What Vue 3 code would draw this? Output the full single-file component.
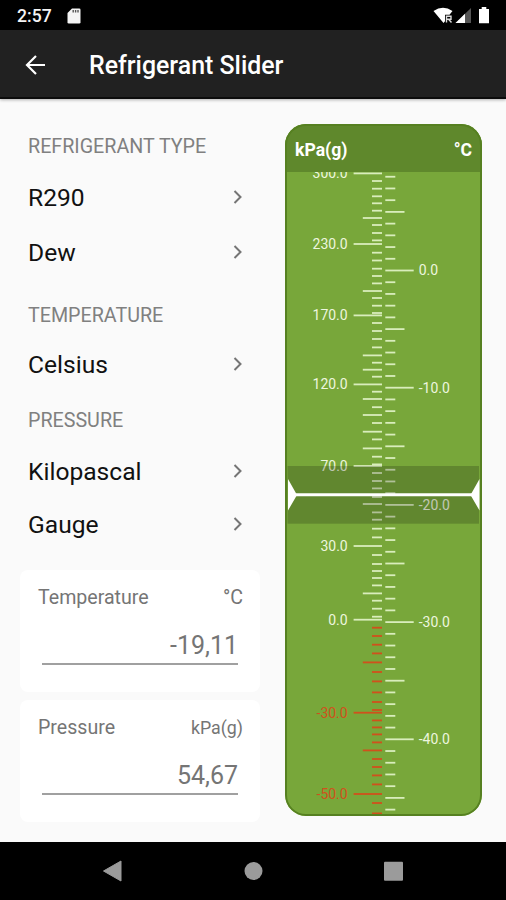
<template>
  <div class="screen">
    <!-- Status bar -->
    <div class="status-bar">
      <span class="clock">2:57</span>
      <svg class="sd-icon" width="14" height="16" viewBox="0 0 14 16">
        <path d="M5 0.5h7.2a1.3 1.3 0 0 1 1.3 1.3v12.4a1.3 1.3 0 0 1-1.3 1.3H1.8a1.3 1.3 0 0 1-1.3-1.3V5z" fill="#f4f4f4" />
        <path d="M6.2 2v2.5M8.6 2v2.5M11 2v2.5" stroke="#555" stroke-width="1.4" />
      </svg>
      <svg class="system-icons" width="60" height="20" viewBox="0 0 60 20">
        <path d="M1.500 5Q11-1.500 20.500 5L17.500 8.800H13v6.400L11.500 17z" fill="#fff" />
        <path d="M14.500 16.500V10.300h4.500v3h-4.500M16.500 13.300l3 3.200" fill="none" stroke="#ddd" stroke-width="1.4" />
        <path d="M23.500 17L39 2v15z" fill="#555" />
        <path d="M23.500 17L33 7.800v9.200z" fill="#fff" />
        <path d="M47 3h2.700V1h4.600v2H57v14.200H47z" fill="#fff" />
      </svg>
    </div>

    <!-- App bar -->
    <div class="app-bar">
      <button class="back-btn">
        <svg width="22" height="20" viewBox="0 0 22 20">
          <path d="M20 10H2M11 1L2 10l9 9" fill="none" stroke="#fff" stroke-width="2.2" />
        </svg>
      </button>
      <h1 class="title">Refrigerant Slider</h1>
    </div>

    <div class="content">
      <!-- Settings -->
      <div class="settings">
        <div v-for="group in groups" :key="group.label" class="group" :class="group.name">
          <h2 class="group-label">{{ group.label }}</h2>
          <button v-for="item in group.items" :key="item" class="option">
            <span>{{ item }}</span>
            <svg class="chevron" width="10" height="16" viewBox="0 0 10 16">
              <path d="M1.500 2L7.500 8l-6 6" fill="none" stroke="#757575" stroke-width="2" />
            </svg>
          </button>
        </div>

        <!-- Values -->
        <div v-for="field in fields" :key="field.label" class="value-card">
          <div class="value-head">
            <span>{{ field.label }}</span>
            <span :class="field.name">{{ field.unit }}</span>
          </div>
          <div class="value">{{ field.value }}</div>
        </div>
      </div>

      <!-- Slider -->
      <div class="slider">
        <div class="slider-head">
          <span>kPa(g)</span>
          <span>°C</span>
        </div>
        <svg class="scale" width="197" height="644" viewBox="285 172 197 644">
          <g v-for="tick in pressureTicks" :key="'p' + tick.y" :class="{ vacuum: tick.y > 622 }">
            <rect :x="382 - tick.length" :y="tick.y - 0.9" :width="tick.length" height="1.8" class="tick" />
            <text v-if="tick.text" x="347.700" :y="tick.y + 4.8" text-anchor="end" class="tick-text">{{ tick.text }}</text>
          </g>
          <g v-for="tick in temperatureTicks" :key="'t' + tick.y">
            <rect x="385.300" :y="tick.y - 0.9" :width="tick.length" height="1.8" class="tick" />
            <text v-if="tick.text" x="418.700" :y="tick.y + 4.8" class="tick-text">{{ tick.text }}</text>
          </g>
          <!-- Selected range -->
          <rect x="287.500" y="466" width="191.500" height="57.700" class="band" />
          <path d="M296 494.800h176" stroke="#fff" stroke-width="3" />
          <path d="M288 479l9 16-9 15.500zM479.500 479l-9 16 9 15.500z" fill="#fff" />
        </svg>
      </div>
    </div>

    <!-- Navigation bar -->
    <div class="nav-bar">
      <svg width="506" height="58" viewBox="0 0 506 58">
        <path d="M103.500 29L121 19v20z" fill="#9b9b9b" stroke="#9b9b9b" stroke-linejoin="round" />
        <circle cx="253.500" cy="29" r="9" fill="#9b9b9b" />
        <rect x="384" y="19.800" width="19" height="19" rx="1" fill="#9b9b9b" />
      </svg>
    </div>
  </div>
</template>

<script setup>
const groups = [
  { name: "refrigerant", label: "REFRIGERANT TYPE", items: ["R290", "Dew"] },
  { name: "temperature", label: "TEMPERATURE", items: ["Celsius"] },
  { name: "pressure", label: "PRESSURE", items: ["Kilopascal", "Gauge"] },
];

const fields = [
  { name: "unit-temp", label: "Temperature", unit: "°C", value: "-19,11" },
  { name: "unit-press", label: "Pressure", unit: "kPa(g)", value: "54,67" },
];

const SHORT = 10;
const MEDIUM = 19.2;
const LONG = 28.4;

// Pressure is not linear, so its ticks are stored as positions
const labelled = {
  173.4: "300.0",
  244: "230.0",
  315.4: "170.0",
  384.4: "120.0",
  466: "70.0",
  546: "30.0",
  619.7: "0.0",
  712.7: "-30.0",
  794: "-50.0",
};
const medium = [218, 291, 355.4, 369.7, 399, 415, 431.7, 448.4, 504, 593.4, 662.4, 750.4];
const short = [
  181, 188.7, 196.3, 203.3, 210.7, 225, 233, 240.4, 252.7, 260.5, 268.7, 276, 283.4, 298,
  305.7, 313, 323, 331, 339, 347.4, 362.7, 376.7, 391.7, 407.2, 423, 439.4, 456.7, 464.4,
  473, 481, 488.4, 497, 512.4, 519.7, 528.7, 537.4, 555, 564, 571, 578, 585.4, 600.7,
  608.7, 616.7, 627.7, 636, 644.7, 653.4, 672, 681.4, 692.4, 702, 710, 720.4, 727.4,
  734.4, 742.4, 759, 767, 775.4, 784.4, 803, 813.4,
];
const pressureTicks = [
  ...Object.keys(labelled).map((y) => ({ y: Number(y), length: LONG, text: labelled[y] })),
  ...medium.map((y) => ({ y, length: MEDIUM })),
  ...short.map((y) => ({ y, length: SHORT })),
];

// One tick for each degree
const temperatureTicks = [];
for (let t = 8; t >= -46; t--) {
  const y = 270.5 - t * 11.72;
  if (t % 10 === 0) {
    temperatureTicks.push({ y, length: LONG, text: t === 0 ? "0.0" : t + ".0" });
  } else {
    temperatureTicks.push({ y, length: t % 5 === 0 ? MEDIUM : SHORT });
  }
}
</script>

<style>
body{
  margin: 0;
  background: #fafafa;
}
</style>

<style scoped>
*{
  margin: 0;
  padding: 0;
  box-sizing: border-box;
}
.screen{
  width: 506px;
  height: 900px;
  display: flex;
  flex-direction: column;
  overflow: hidden;
  background: #fafafa;
  font-family: Roboto, sans-serif;
}
button{
  border: none;
  background: transparent;
  font-family: inherit;
  cursor: pointer;
}
svg{
  display: block;
}
/* Status bar */
.status-bar{
  height: 30px;
  background: #000;
  color: #f4f4f4;
  display: flex;
  align-items: center;
  padding: 1px 14px 0 17px;
}
.clock{
  font-size: 17.6px;
  font-weight: 500;
  width: 50px;
}
.system-icons{
  margin-left: auto;
}
/* App bar */
.app-bar{
  height: 69px;
  background: #212121;
  border-bottom: 2px solid #0c0c0c;
  box-shadow: 0 1px 3px rgba(0,0,0,0.3);
  display: flex;
  align-items: center;
  padding: 2px 0 0 25px;
}
.back-btn{
  width: 64px;
}
.title{
  color: #fff;
  font-size: 24.9px;
  font-weight: 500;
  padding-top: 2px;
}
/* Content */
.content{
  height: 743px;
  display: flex;
  gap: 25px;
  padding: 25px 24px 0 20px;
}
.settings{
  width: 240px;
  padding-top: 11px;
}
.group{
  padding: 0 17px 0 8px;
}
.group-label{
  height: 24px;
  line-height: 24px;
  font-size: 19.7px;
  font-weight: 400;
  color: #808080;
}
.option{
  width: 100%;
  height: 55px;
  display: flex;
  align-items: center;
  justify-content: space-between;
  font-size: 24.6px;
  color: #111;
}
.chevron{
  margin-top: -2px;
}
.refrigerant .group-label{
  margin-bottom: 11px;
}
.temperature{
  margin-top: 24px;
}
.temperature .group-label{
  margin-bottom: 9px;
}
.pressure{
  margin-top: 17px;
  margin-bottom: 19px;
}
.pressure .group-label{
  margin-bottom: 12px;
}
.pressure .option{
  height: 53px;
}
/* Value cards */
.value-card{
  height: 122px;
  border-radius: 8px;
  background: #fff;
  padding: 15px 17px 0 18px;
  margin-bottom: 8px;
  color: #757575;
}
.value-head{
  display: flex;
  justify-content: space-between;
  font-size: 19.6px;
  line-height: 26px;
}
.unit-press{
  font-size: 17.8px;
}
.value{
  height: 54px;
  margin: 0 5px 0 4px;
  padding-top: 19px;
  border-bottom: 2px solid #a0a0a0;
  font-size: 25px;
  line-height: 32px;
  text-align: right;
}
/* Slider */
.slider{
  width: 197px;
  height: 692px;
  border-radius: 21px;
  background: #78a73a;
  overflow: hidden;
  position: relative;
}
.slider::after{
  content: "";
  position: absolute;
  inset: 0;
  border: 2px solid #568021;
  border-radius: 21px;
}
.slider-head{
  height: 48px;
  background: #5f882c;
  color: #fff;
  font-size: 17.6px;
  font-weight: 700;
  display: flex;
  align-items: center;
  justify-content: space-between;
  padding: 3px 10px 0;
}
.tick{
  fill: #d9edbc;
}
.tick-text{
  fill: #edf6df;
  font-size: 14px;
  font-weight: 400;
}
.vacuum .tick,
.vacuum .tick-text{
  fill: #d0511c;
}
.band{
  fill: #000;
  fill-opacity: 0.19;
}
/* Navigation bar */
.nav-bar{
  height: 58px;
  background: #000;
}
</style>
